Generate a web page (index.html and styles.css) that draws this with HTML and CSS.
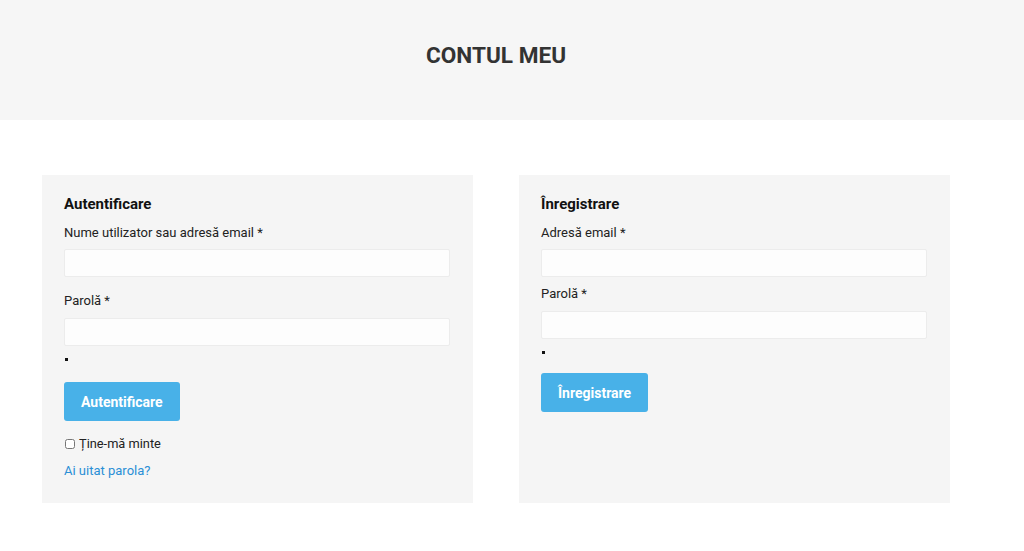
FILE: index.html
```html
<!DOCTYPE html>
<html lang="ro">
<head>
<meta charset="utf-8">
<title>Contul meu</title>
<link rel="stylesheet" href="styles.css">
</head>
<body>
<header class="page-header">
  <h1 class="page-title">CONTUL MEU</h1>
</header>
<main class="account">
  <section class="card">
    <h2 class="card-title">Autentificare</h2>
    <div class="row row-login">
      <label class="label">Nume utilizator sau adresă email *</label>
      <input class="input" type="text">
    </div>
    <div class="row row-login">
      <label class="label">Parolă *</label>
      <input class="input" type="password">
    </div>
    <div class="dot-row"><span class="dot"></span></div>
    <button class="btn" type="button">Autentificare</button>
    <label class="remember"><input type="checkbox" class="check"> Ține-mă minte</label>
    <a class="lost" href="#">Ai uitat parola?</a>
  </section>
  <section class="card card-reg">
    <h2 class="card-title">Înregistrare</h2>
    <div class="row row-reg">
      <label class="label">Adresă email *</label>
      <input class="input" type="email">
    </div>
    <div class="row row-reg">
      <label class="label">Parolă *</label>
      <input class="input" type="password">
    </div>
    <div class="dot-row"><span class="dot"></span></div>
    <button class="btn" type="button">Înregistrare</button>
  </section>
</main>
</body>
</html>
```
FILE: styles.css
```css
* { box-sizing: border-box; }
body {
  margin: 0;
  background: #fff;
  font-family: Roboto, "Liberation Sans", sans-serif;
  color: #222;
}
.page-header {
  height: 120px;
  background: #f6f6f6;
  display: flex;
  align-items: center;
  justify-content: center;
  padding-right: 32px;
}
.page-title {
  margin: 0;
  font-size: 22.6px;
  font-weight: 700;
  color: #333;
  position: relative;
  top: -5px;
}
.account {
  display: grid;
  grid-template-columns: 431px 431px;
  column-gap: 46px;
  margin: 55px 0 0 42px;
  width: 908px;
}
.card {
  background: #f5f5f5;
  padding: 19px 22px 22px 22px;
  display: flex;
  flex-direction: column;
  align-items: flex-start;
  min-height: 328px;
}
.card-title {
  margin: 0 0 9px;
  font-size: 15px;
  line-height: 20px;
  font-weight: 700;
  color: #111;
}
.row {
  display: flex;
  flex-direction: column;
  align-self: stretch;
  margin-right: 1px;
}
.row-login + .row-login { margin-top: 14px; }
.row-reg + .row-reg { margin-top: 7px; }
.label {
  font-size: 13px;
  line-height: 20px;
  color: #222;
  margin-bottom: 6px;
}
.row + .row .label { margin-bottom: 7px; }
.input {
  height: 28px;
  border: 1px solid #ececec;
  background: #fdfdfd;
  border-radius: 2px;
  margin: 0;
  padding: 0 8px;
  font: inherit;
}
.dot-row {
  height: 22px;
  display: flex;
  align-items: center;
  padding-top: 4px;
}
.dot {
  width: 3px;
  height: 3px;
  background: #111;
  margin-left: 1px;
}
.btn {
  margin-top: 14px;
  height: 39px;
  padding: 0 17px;
  background: #48b1e8;
  border: 0;
  border-radius: 3px;
  color: #fff;
  font-family: Roboto, "Liberation Sans", sans-serif;
  font-size: 14px;
  font-weight: 700;
}
.card-reg .btn { margin-top: 12px; }
.remember {
  margin-top: 14px;
  font-size: 12.8px;
  line-height: 18px;
  color: #222;
  display: flex;
  align-items: center;
  gap: 3px;
}
.check {
  margin: 0 1px 0 1px;
  width: 10px;
  height: 10px;
}
.lost {
  margin-top: 9px;
  font-size: 13px;
  line-height: 18px;
  color: #2a8fd6;
  text-decoration: none;
}
```
